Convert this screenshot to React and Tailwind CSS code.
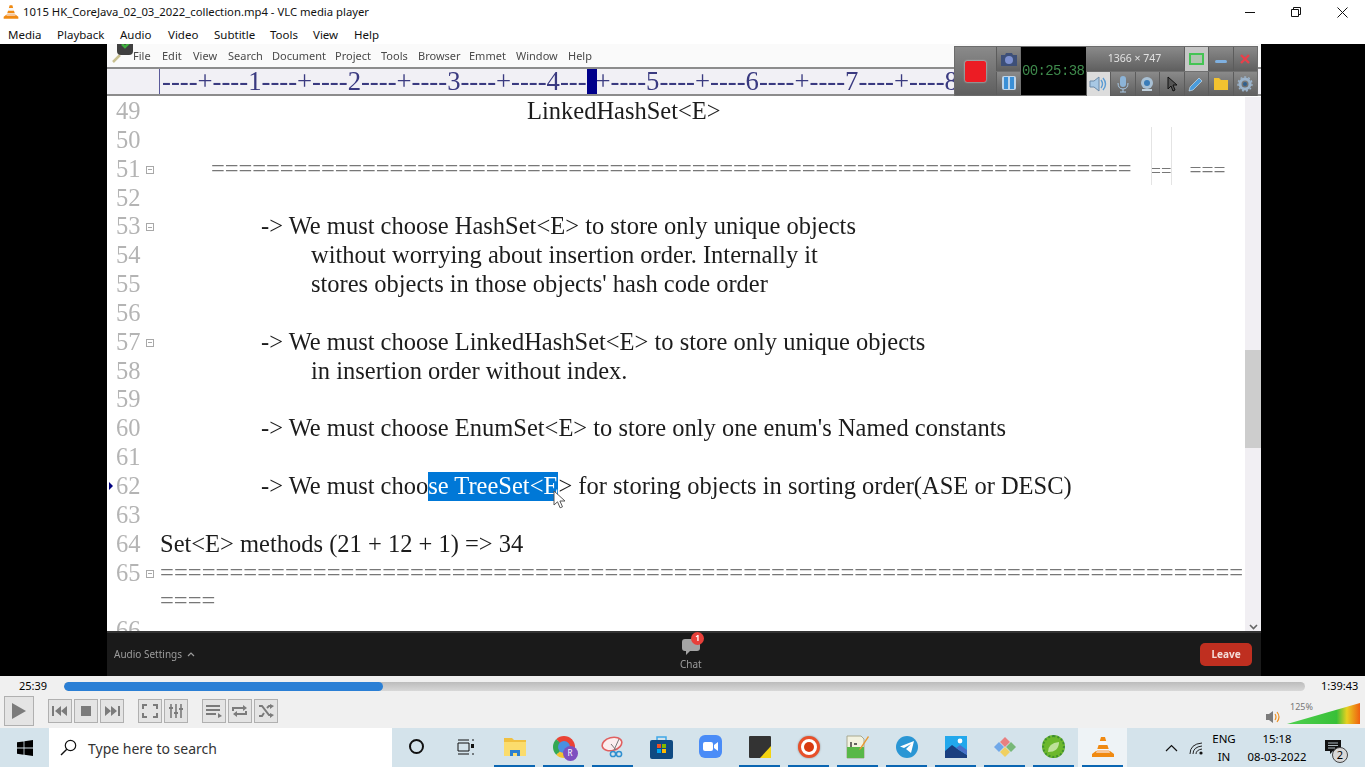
import React from 'react';

const ui = { fontFamily: '"Noto Sans", "Open Sans", sans-serif' };
const serif = { fontFamily: '"Liberation Serif", serif' };

const vlcMenu = [
  ['Media', 'w-[49px]'],
  ['Playback', 'w-[63px]'],
  ['Audio', 'w-[48px]'],
  ['Video', 'w-[46px]'],
  ['Subtitle', 'w-[56px]'],
  ['Tools', 'w-[43px]'],
  ['View', 'w-[41px]'],
  ['Help', 'w-[40px]'],
];

const editorMenu = [
  ['File', 'w-[29px]'],
  ['Edit', 'w-[31px]'],
  ['View', 'w-[35px]'],
  ['Search', 'w-[44px]'],
  ['Document', 'w-[63px]'],
  ['Project', 'w-[46px]'],
  ['Tools', 'w-[37px]'],
  ['Browser', 'w-[51px]'],
  ['Emmet', 'w-[47px]'],
  ['Window', 'w-[52px]'],
  ['Help', 'w-[40px]'],
];

const Cone = ({ size = 16 }) => (
  <svg width={size} height={size} viewBox="0 0 24 24">
    <path d="M10 2h4l5 16h-14z" fill="#f7f7f7" />
    <path d="M10 2h4l1.2 4H8.8zM7.6 10h8.8l1.3 4H6.3z" fill="#f08a12" />
    <path d="M5 16h14l4 3v3H1v-3z" fill="#f08a12" />
    <path d="M5 18h14l-1-3H6z" fill="#f7c79a" />
  </svg>
);

const Row = ({ n, fold, mark, children, h = 'h-[28.85px]' }) => (
  <div className={`flex ${h}`}>
    <div className="relative flex w-[53px] shrink-0 items-start pl-[9px]">
      {mark && <span className="absolute left-[2px] top-[10px] h-0 w-0 border-y-[4px] border-l-[4px] border-y-transparent border-l-[#000080]" />}
      <span className="w-[26px] text-[24.5px] leading-[28.85px] text-[#b4b4b4]">{n}</span>
      {fold && (
        <span className="ml-[4px] mt-[11px] flex h-[8px] w-[8px] items-center justify-center border border-[#a8a8a8]">
          <span className="h-px w-[4px] bg-[#a8a8a8]" />
        </span>
      )}
    </div>
    <div className="whitespace-pre text-[24.5px] leading-[28.85px] text-[#1c1c1c]">{children}</div>
  </div>
);

const RecBtn = ({ children, className = '' }) => (
  <div className={`flex h-[24px] w-[24.5px] items-center justify-center border-l border-[#5c5c5c] bg-gradient-to-b from-[#8a8a8a] to-[#5f5f5f] ${className}`}>
    {children}
  </div>
);

const RecorderBar = () => (
  <div className="absolute left-[954px] top-[46px] z-20 flex h-[50px] w-[304px] border border-[#6c6c6c] bg-[#707070] blur-[0.4px]">
    <div className="flex w-[41px] items-center justify-center bg-gradient-to-b from-[#8a8a8a] to-[#5f5f5f]">
      <div className="h-[21px] w-[21px] rounded-[2px] bg-[#ec1c24] shadow-[0_0_2px_#fff]" />
    </div>
    <div className="flex w-[25px] flex-col">
      <RecBtn>
        <svg width="18" height="16" viewBox="0 0 18 16"><path d="M1 4h4l1-2h6l1 2h4v11H1z" fill="#3d4f78" /><circle cx="9" cy="9" r="4" fill="#7d90d0" /></svg>
      </RecBtn>
      <RecBtn className="mt-px">
        <svg width="16" height="16" viewBox="0 0 16 16"><rect x="1" y="1" width="14" height="14" rx="2" fill="#bcd4ea" /><rect x="3" y="2" width="4" height="12" fill="#3a8fd6" /><rect x="9" y="2" width="4" height="12" fill="#3a8fd6" /></svg>
      </RecBtn>
    </div>
    <div className="flex w-[65px] items-center justify-center bg-black font-['Liberation_Mono',monospace] text-[14px] font-light tracking-[-0.6px] text-[#3f8a4c]">
      00:25:38
    </div>
    <div className="flex flex-1 flex-col">
      <div className="flex h-[24px]">
        <div className="flex w-[98px] items-center justify-center bg-gradient-to-b from-[#8a8a8a] to-[#5f5f5f] text-[10.5px] text-[#e2e2e2]" style={ui}>
          1366 × 747
        </div>
        <RecBtn className="bg-none! bg-[#c6c6c6]!">
          <div className="h-[12px] w-[15px] border-2 border-[#44c454] bg-[#b0c4b0]" />
        </RecBtn>
        <RecBtn><div className="mt-[5px] h-[3px] w-[12px] rounded-sm bg-[#7fb0e0]" /></RecBtn>
        <RecBtn>
          <svg width="12" height="12" viewBox="0 0 12 12"><path d="M2 2l8 8M10 2l-8 8" stroke="#e8404a" strokeWidth="2.4" /></svg>
        </RecBtn>
      </div>
      <div className="mt-px flex h-[24px]">
        <RecBtn className="bg-none! bg-[#dcdcdc]!">
          <svg width="18" height="16" viewBox="0 0 18 16"><path d="M1 5h4l5-4v14l-5-4H1z" fill="#a8c8e4" stroke="#6c8aa8" /><path d="M12 4q3 4 0 8M14 2q5 6 0 12" fill="none" stroke="#5c9cd4" strokeWidth="1.4" /></svg>
        </RecBtn>
        <RecBtn>
          <svg width="12" height="18" viewBox="0 0 12 18"><rect x="3" y="1" width="6" height="11" rx="3" fill="#8cb4d8" /><path d="M1 8q0 6 5 6t5-6M6 14v3M3 17h6" fill="none" stroke="#a8c8e4" /></svg>
        </RecBtn>
        <RecBtn>
          <svg width="16" height="16" viewBox="0 0 16 16"><circle cx="8" cy="7" r="6" fill="#a8c0d4" /><circle cx="8" cy="7" r="3" fill="#3a7cb8" /><path d="M3 14h10" stroke="#c0d0dc" strokeWidth="2" /></svg>
        </RecBtn>
        <RecBtn>
          <svg width="12" height="16" viewBox="0 0 12 16"><path d="M2 1v12l3-3 2 5 2-1-2-5h4z" fill="#555" stroke="#111" /></svg>
        </RecBtn>
        <RecBtn>
          <svg width="16" height="16" viewBox="0 0 16 16"><path d="M11 2l3 3-9 9-4 1 1-4z" fill="#4a9cdc" stroke="#d8e8f4" strokeWidth=".6" /></svg>
        </RecBtn>
        <RecBtn>
          <svg width="16" height="14" viewBox="0 0 16 14"><path d="M1 1h5l2 2h7v10H1z" fill="#f2c230" /></svg>
        </RecBtn>
        <RecBtn>
          <svg width="16" height="16" viewBox="0 0 16 16"><circle cx="8" cy="8" r="5" fill="none" stroke="#9cb4cc" strokeWidth="3" /><circle cx="8" cy="8" r="7" fill="none" stroke="#9cb4cc" strokeWidth="1.4" strokeDasharray="2 2" /><circle cx="8" cy="8" r="2" fill="#2f5f8f" /></svg>
        </RecBtn>
      </div>
    </div>
  </div>
);

const Editor = () => (
  <div className="relative flex min-h-0 min-w-0 flex-1 flex-col overflow-hidden bg-white">
    <div className="flex h-[23px] shrink-0 items-center overflow-hidden bg-[#fafafa] pt-[2px] text-[11px] text-[#4a4a4a] blur-[0.3px]" style={ui}>
      <svg className="ml-[5px] mb-[8px] shrink-0" width="21" height="20" viewBox="0 0 21 20">
        <path d="M8 12L1 19" stroke="#c8c090" strokeWidth="2.5" />
        <path d="M5 0h16v8q0 4-4 4H9q-4 0-4-4z" fill="#3f3f3f" />
        <path d="M10 1l3 3 4-4" fill="none" stroke="#3fae3f" strokeWidth="2.5" />
      </svg>
      <div className="flex">
        {editorMenu.map(([label, w]) => (
          <span key={label} className={w}>{label}</span>
        ))}
      </div>
    </div>
    <div className="flex h-[29px] shrink-0 overflow-hidden border-y-2 border-[#8c8c8c] bg-[#f1f0f5] blur-[0.3px]" style={serif}>
      <div className="w-[53px] shrink-0 border-r border-[#5a5a9a]" />
      <div className="relative flex-1">
        <div className="whitespace-pre pl-[2px] text-[26.7px] leading-[24px] text-[#3a3a80]">
          ----+----1----+----2----+----3----+----4----+----5----+----6----+----7----+----8
        </div>
        <div className="absolute left-[427px] top-0 h-full w-[10px] bg-[#00008b]" />
      </div>
    </div>
    <div className="relative flex min-h-0 flex-1 pt-px blur-[0.3px]">
      <div className="min-w-0 flex-1 overflow-hidden" style={serif}>
        <Row n="49"><span className="ml-[367px]">LinkedHashSet&lt;E&gt;</span></Row>
        <Row n="50" />
        <Row n="51" fold>
          <span className="ml-[51px] inline-block tracking-[-0.08px] text-[#777]">{'='.repeat(67)}</span>
          <span className="ml-[19px] inline-block text-[18.6px] text-[#777]">==</span>
          <span className="ml-[18px] inline-block text-[21.3px] text-[#777]">===</span>
        </Row>
        <Row n="52" />
        <Row n="53" fold><span className="ml-[101px]">-&gt; We must choose HashSet&lt;E&gt; to store only unique objects</span></Row>
        <Row n="54"><span className="ml-[151px]">without worrying about insertion order. Internally it</span></Row>
        <Row n="55"><span className="ml-[151px]">stores objects in those objects' hash code order</span></Row>
        <Row n="56" />
        <Row n="57" fold><span className="ml-[101px]">-&gt; We must choose LinkedHashSet&lt;E&gt; to store only unique objects</span></Row>
        <Row n="58"><span className="ml-[151px]">in insertion order without index.</span></Row>
        <Row n="59" />
        <Row n="60"><span className="ml-[101px]">-&gt; We must choose EnumSet&lt;E&gt; to store only one enum's Named constants</span></Row>
        <Row n="61" />
        <Row n="62" mark>
          <span className="ml-[101px]">-&gt; We must choo</span>
          <span className="inline-block bg-[#0078d7] text-white">se TreeSet&lt;E</span>
          <span>&gt; for storing objects in sorting order(ASE or DESC)</span>
        </Row>
        <Row n="63" />
        <Row n="64">Set&lt;E&gt; methods (21 + 12 + 1) =&gt; 34</Row>
        <Row n="65" fold h="h-[57.7px]">
          <div className="tracking-[0.07px] text-[#777]">{'='.repeat(78)}</div>
          <div className="text-[#777]">{'='.repeat(4)}</div>
        </Row>
        <Row n="66" />
      </div>
      <div className="relative w-[16px] shrink-0 bg-[#f1eff3]">
        <div className="absolute left-0 top-[253px] h-[98px] w-full bg-[#cdcdcd]" />
        <svg className="absolute bottom-[1px] left-[4px]" width="9" height="6" viewBox="0 0 9 6"><path d="M1 1l3.5 3.5L8 1" fill="none" stroke="#666" strokeWidth="1.6" /></svg>
      </div>
      {/* stray lines left in the video */}
      <div className="absolute left-[1044px] top-[31px] h-[58px] w-px bg-[#e4e4e4]" />
      <div className="absolute left-[1064px] top-[31px] h-[58px] w-px bg-[#e4e4e4]" />
      {/* mouse pointer */}
      <svg className="absolute left-[446px] top-[394px]" width="13" height="19" viewBox="0 0 13 19">
        <path d="M1 1v14l3.5-3.2 2.6 6 2.4-1-2.6-5.8H12z" fill="#fff" stroke="#555" />
      </svg>
    </div>
  </div>
);

const ZoomBar = () => (
  <div className="flex h-[45px] shrink-0 items-center border-t-2 border-[#333] bg-[#1a1a1a] pl-[7px] pr-[9px] blur-[0.3px]" style={ui}>
    <div className="flex w-[566px] items-center gap-[5px] text-[10px] text-[#9c9c9c]">
      Audio Settings
      <svg width="8" height="5" viewBox="0 0 8 5"><path d="M1 4l3-3 3 3" fill="none" stroke="#9c9c9c" strokeWidth="1.2" /></svg>
    </div>
    <div className="relative flex flex-col items-center">
      <svg width="18" height="17" viewBox="0 0 18 17"><path d="M3 0h12q3 0 3 3v6q0 3-3 3H8l-4 4v-4H3q-3 0-3-3V3q0-3 3-3z" fill="#a4a4a4" /></svg>
      <span className="mt-[1px] text-[10px] leading-[14px] text-[#9c9c9c]">Chat</span>
      <span className="absolute left-[11px] top-[-7px] flex h-[13px] w-[13px] items-center justify-center rounded-full bg-[#e8403a] text-[8px] font-bold text-white">1</span>
    </div>
    <div className="ml-auto flex h-[23px] w-[52px] items-center justify-center rounded-[5px] bg-[#bf2f20] text-[10px] font-bold text-[#f4dcd8]">Leave</div>
  </div>
);

const CtlBtn = ({ children }) => (
  <div className="flex h-[24px] w-[24px] items-center justify-center border border-[#b0b0b0] bg-[#e4e4e4]">{children}</div>
);

const g = '#7b7b7b';

const Controls = () => (
  <div className="flex h-[52px] shrink-0 flex-col bg-[#f0f0f0] text-[11px] text-black" style={ui}>
    <div className="flex h-[20px] shrink-0 items-center">
      <span className="ml-[19px] w-[45px]">25:39</span>
      <div className="h-[9px] w-[1241px] overflow-hidden rounded-full bg-gradient-to-b from-[#bcbcbc] to-[#d8d8d8]">
        <div className="h-full w-[319px] rounded-full bg-[#2a7fd5]" />
      </div>
      <span className="ml-[16px]">1:39:43</span>
    </div>
    <div className="relative flex items-start pl-[4px]">
      <div className="flex h-[30px] w-[30px] items-center justify-center border border-[#b0b0b0] bg-[#e4e4e4]">
        <svg width="16" height="18" viewBox="0 0 16 18"><path d="M1 1l14 8-14 8z" fill={g} /></svg>
      </div>
      <div className="ml-[14px] mt-[3px] flex gap-[2px]">
        <CtlBtn><svg width="16" height="10" viewBox="0 0 16 10"><path d="M0 0h2v10H0zM9 0v10L3 5zM15 0v10L9 5z" fill={g} /></svg></CtlBtn>
        <CtlBtn><div className="h-[10px] w-[10px] bg-[#7b7b7b]" /></CtlBtn>
        <CtlBtn><svg width="16" height="10" viewBox="0 0 16 10"><path d="M16 0h-2v10h2zM7 0v10l6-5zM1 0v10l6-5z" fill={g} /></svg></CtlBtn>
      </div>
      <div className="ml-[14px] mt-[3px] flex gap-[2px]">
        <CtlBtn><svg width="16" height="14" viewBox="0 0 16 14"><path d="M1 5V1h4M11 1h4v4M15 9v4h-4M5 13H1V9" fill="none" stroke={g} strokeWidth="2" /></svg></CtlBtn>
        <CtlBtn><svg width="16" height="14" viewBox="0 0 16 14"><path d="M3 0v14M8 0v14M13 0v14" stroke={g} strokeWidth="1.6" /><path d="M1 4h4M6 9h4M11 5h4" stroke={g} strokeWidth="2.2" /></svg></CtlBtn>
      </div>
      <div className="ml-[14px] mt-[3px] flex gap-[2px]">
        <CtlBtn><svg width="16" height="14" viewBox="0 0 16 14"><path d="M0 2h14M0 6h14M0 10h10" stroke={g} strokeWidth="2" /><path d="M12 9l4 3-4 2z" fill={g} /></svg></CtlBtn>
        <CtlBtn><svg width="16" height="14" viewBox="0 0 16 14"><path d="M1 7V4h11M14 7v3H3" fill="none" stroke={g} strokeWidth="2" /><path d="M11 1l4 3-4 3zM5 7l-4 3 4 3z" fill={g} /></svg></CtlBtn>
        <CtlBtn><svg width="16" height="14" viewBox="0 0 16 14"><path d="M1 2h3l7 9h2M1 12h3l2-3M9 4l2-2h2" fill="none" stroke={g} strokeWidth="2" /><path d="M12 0l4 2-4 3zM12 9l4 2-4 3z" fill={g} /></svg></CtlBtn>
      </div>
      <div className="ml-auto flex items-end pr-[5px] pt-[7px]">
        <svg width="14" height="14" viewBox="0 0 14 14"><path d="M0 4h3l4-3v12l-4-3H0z" fill="#7b7b7b" /><path d="M9 4q2 3 0 6M11 2q4 5 0 10" fill="none" stroke="#f09020" strokeWidth="1.2" /></svg>
        <div className="relative ml-[7px] h-[21px] w-[73px]">
          <div className="h-full w-full bg-[linear-gradient(90deg,#4fd04f_0%,#38c038_68%,#e8d020_82%,#f06010_100%)] [clip-path:polygon(0_100%,100%_0,100%_100%)]" />
          <span className="absolute left-[3px] top-[-2px] text-[9px] leading-[12px] text-[#777]">125%</span>
        </div>
      </div>
    </div>
  </div>
);

const TaskIcon = ({ children, on, current }) => (
  <div className={`flex h-full w-[49px] shrink-0 flex-col ${current ? 'bg-[#eef3f6]' : ''} ${on ? 'px-[4px]' : ''}`}>
    <div className={`flex flex-1 items-center justify-center ${on ? 'border-b-2 border-[#0a66b2]' : 'pb-[2px]'}`}>
      {children}
    </div>
  </div>
);

const Taskbar = () => (
  <div className="flex min-h-0 flex-1 bg-[#d4e3eb] text-black" style={ui}>
    <div className="flex w-[49px] shrink-0 items-center justify-center">
      <svg width="16" height="16" viewBox="0 0 16 16"><path d="M0 2.3L6.6 1.4v6.2H0zM7.4 1.3L16 0v7.6H7.4zM0 8.4h6.6v6.3L0 13.7zM7.4 8.4H16V16l-8.6-1.2z" fill="#000" /></svg>
    </div>
    <div className="flex w-[343px] shrink-0 items-center bg-white pl-[11px] text-[14px] text-[#333]">
      <svg width="17" height="17" viewBox="0 0 17 17"><circle cx="10.5" cy="6.5" r="5.2" fill="none" stroke="#111" strokeWidth="1.2" /><path d="M6.8 10.2L1 16" stroke="#111" strokeWidth="1.4" /></svg>
      <span className="ml-[11px] mt-px">Type here to search</span>
    </div>
    <TaskIcon><div className="h-[15px] w-[15px] rounded-full border-[2.5px] border-[#111]" /></TaskIcon>
    <TaskIcon>
      <svg width="18" height="16" viewBox="0 0 18 16"><path d="M1 1h11M1 15h11M1 4h11v8H1z" fill="none" stroke="#111" /><path d="M15 1h2M15 15h2" stroke="#111" /><rect x="14" y="5" width="3" height="4" fill="#111" /></svg>
    </TaskIcon>
    <TaskIcon on>
      <svg width="22" height="19" viewBox="0 0 22 19"><path d="M0 1h8l2 2h12v16H0z" fill="#f0c040" /><path d="M0 5h22v14H0z" fill="#fbdc6c" /><path d="M6 13h10v6H6z" fill="#2a7fd0" /><path d="M9 16h4v3H9z" fill="#fbdc6c" /></svg>
    </TaskIcon>
    <TaskIcon on>
      <div className="relative h-[22px] w-[22px] rounded-full border-[5px] border-b-[#f2c230] border-l-[#34a853] border-r-[#ea4335] border-t-[#ea4335] bg-[#4a90e2]">
        <span className="absolute left-[5px] top-[5px] flex h-[15px] w-[15px] items-center justify-center rounded-full bg-[#7e4fc0] text-[8px] text-white">R</span>
      </div>
    </TaskIcon>
    <TaskIcon on>
      <svg width="24" height="22" viewBox="0 0 24 22"><ellipse cx="11" cy="8" rx="10" ry="6.5" fill="#fbeeee" stroke="#e06060" strokeWidth="1.6" transform="rotate(-15 11 8)" /><path d="M10 8l5 6M18 3l-5 11" stroke="#777" /><circle cx="12" cy="18" r="2.6" fill="none" stroke="#2f8fd0" strokeWidth="1.5" /><circle cx="18" cy="18" r="2.6" fill="none" stroke="#2f8fd0" strokeWidth="1.5" /></svg>
    </TaskIcon>
    <TaskIcon>
      <svg width="23" height="24" viewBox="0 0 23 24"><path d="M7 5V2h9v3" fill="none" stroke="#3fa8e8" strokeWidth="1.5" /><rect y="5" width="23" height="19" rx="2" fill="#0f4a82" /><rect x="7" y="9" width="4" height="4" fill="#f25022" /><rect x="12" y="9" width="4" height="4" fill="#7fba00" /><rect x="7" y="14" width="4" height="4" fill="#00a4ef" /><rect x="12" y="14" width="4" height="4" fill="#ffb900" /></svg>
    </TaskIcon>
    <TaskIcon>
      <svg width="23" height="23" viewBox="0 0 23 23"><rect width="23" height="23" rx="6" fill="#4a8cf7" /><rect x="4" y="7" width="10" height="9" rx="2" fill="#fff" /><path d="M15 10l4-3v9l-4-3z" fill="#fff" /></svg>
    </TaskIcon>
    <TaskIcon on>
      <svg width="22" height="22" viewBox="0 0 22 22"><rect width="22" height="22" rx="1" fill="#333" /><path d="M22 10v12H11z" fill="#f4d410" /></svg>
    </TaskIcon>
    <TaskIcon on>
      <div className="flex h-[22px] w-[22px] items-center justify-center rounded-full border-[3px] border-[#e8502a] bg-white shadow-[0_0_2px_#888]">
        <div className="h-[10px] w-[10px] rounded-full bg-[#d83a10]" />
      </div>
    </TaskIcon>
    <TaskIcon on>
      <svg width="24" height="24" viewBox="0 0 24 24"><path d="M1 1h14l3 3v19H1z" fill="#f2f2e0" stroke="#a8a890" /><rect x="1" y="12" width="17" height="11" fill="#58b848" /><path d="M5 7v5M8 9h3" stroke="#333" strokeWidth="1.4" /><path d="M22 1l1 1-8 12-2 1 1-2z" fill="#e89830" /></svg>
    </TaskIcon>
    <TaskIcon on>
      <div className="flex h-[22px] w-[22px] items-center justify-center rounded-full bg-[#2a96d4]">
        <svg width="14" height="12" viewBox="0 0 14 12"><path d="M14 0L0 5.5l4 1.5L11 3 6 8l5 4z" fill="#fff" /></svg>
      </div>
    </TaskIcon>
    <TaskIcon on>
      <svg width="22" height="22" viewBox="0 0 22 22"><rect width="22" height="22" fill="#22a8ec" /><path d="M0 22V15l7-6 7 5 8 5v3z" fill="#1a3f80" /><path d="M11 12l4-3 7 5v5z" fill="#4a70c8" /><circle cx="15" cy="5" r="2.4" fill="#fff" /></svg>
    </TaskIcon>
    <TaskIcon on>
      <svg width="24" height="24" viewBox="0 0 24 24"><path d="M7 7l5-5 5 5-5 5z" fill="#e88080" /><path d="M1 12l5-5 5 5-5 5z" fill="#70a8e8" /><path d="M13 12l5-5 5 5-5 5z" fill="#78b878" /><path d="M7 17l5-5 5 5-5 5z" fill="#f0d060" /></svg>
    </TaskIcon>
    <TaskIcon on>
      <div className="relative flex h-[23px] w-[23px] items-center justify-center rounded-full border-2 border-dotted border-[#3f8f2f] bg-[#6cb82c]">
        <svg width="13" height="12" viewBox="0 0 13 12"><path d="M1 11Q1 2 12 1q0 10-11 10z" fill="#bfe29a" /></svg>
      </div>
    </TaskIcon>
    <TaskIcon on current><Cone size={24} /></TaskIcon>
    <div className="ml-[32px] flex items-center">
      <div className="flex w-[24px] justify-center">
        <svg width="13" height="8" viewBox="0 0 13 8"><path d="M1 7l5.5-5.5L12 7" fill="none" stroke="#111" strokeWidth="1.2" /></svg>
      </div>
      <div className="flex w-[26px] justify-center">
        <svg width="14" height="14" viewBox="0 0 14 14"><path d="M1 13Q1 3 13 2M4 13Q4 6 13 5M7 13q0-4 6-5" fill="none" stroke="#222" /><circle cx="12" cy="12" r="1.6" fill="#111" /></svg>
      </div>
      <div className="flex w-[30px] flex-col items-center text-[11.5px] leading-[18px]">
        <span>ENG</span>
        <span>IN</span>
      </div>
      <div className="flex w-[76px] flex-col items-center text-[11.3px] leading-[18px]">
        <span>15:18</span>
        <span>08-03-2022</span>
      </div>
      <div className="relative flex w-[36px] justify-center">
        <svg width="16" height="15" viewBox="0 0 16 15"><path d="M0 0h16v11H8l-3 3v-3H0z" fill="#111" /><path d="M3 3h10M3 5.5h10M3 8h7" stroke="#d4e3eb" strokeWidth=".8" /></svg>
        <span className="absolute left-[17px] top-[7px] flex h-[16px] w-[16px] items-center justify-center rounded-full border border-[#444] bg-[#d8d8d8] text-[11px]">2</span>
      </div>
    </div>
  </div>
);

export default function App() {
  return (
    <div className="relative flex h-[767px] w-[1365px] flex-col overflow-hidden bg-white">
      {/* title */}
      <div className="flex h-[24px] shrink-0 items-center pl-[3px] text-[11.3px] text-[#111]" style={ui}>
        <Cone />
        <span className="ml-[4px]">1015 HK_CoreJava_02_03_2022_collection.mp4 - VLC media player</span>
        <div className="ml-auto flex items-center">
          <div className="flex w-[46px] justify-center"><div className="h-px w-[10px] bg-[#111]" /></div>
          <div className="flex w-[46px] justify-center">
            <svg width="10" height="10" viewBox="0 0 10 10"><path d="M0.5 2.5h7v7h-7zM2.5 2.5v-2h7v7h-2" fill="none" stroke="#111" /></svg>
          </div>
          <div className="flex w-[46px] justify-center">
            <svg width="11" height="11" viewBox="0 0 11 11"><path d="M.5.5l10 10M10.500.5l-10 10" stroke="#111" /></svg>
          </div>
        </div>
      </div>
      <div className="flex h-[20px] shrink-0 items-center pl-[8px] pt-px text-[11.5px] text-[#111]" style={ui}>
        {vlcMenu.map(([label, w]) => (
          <span key={label} className={w}>{label}</span>
        ))}
      </div>
      {/* video */}
      <div className="relative flex h-[632px] shrink-0 justify-center bg-black pl-[107px] pr-[104px]">
        <div className="flex min-h-0 min-w-0 flex-1 flex-col">
          <Editor />
          <ZoomBar />
        </div>
      </div>
      <RecorderBar />
      <Controls />
      <Taskbar />
    </div>
  );
}
